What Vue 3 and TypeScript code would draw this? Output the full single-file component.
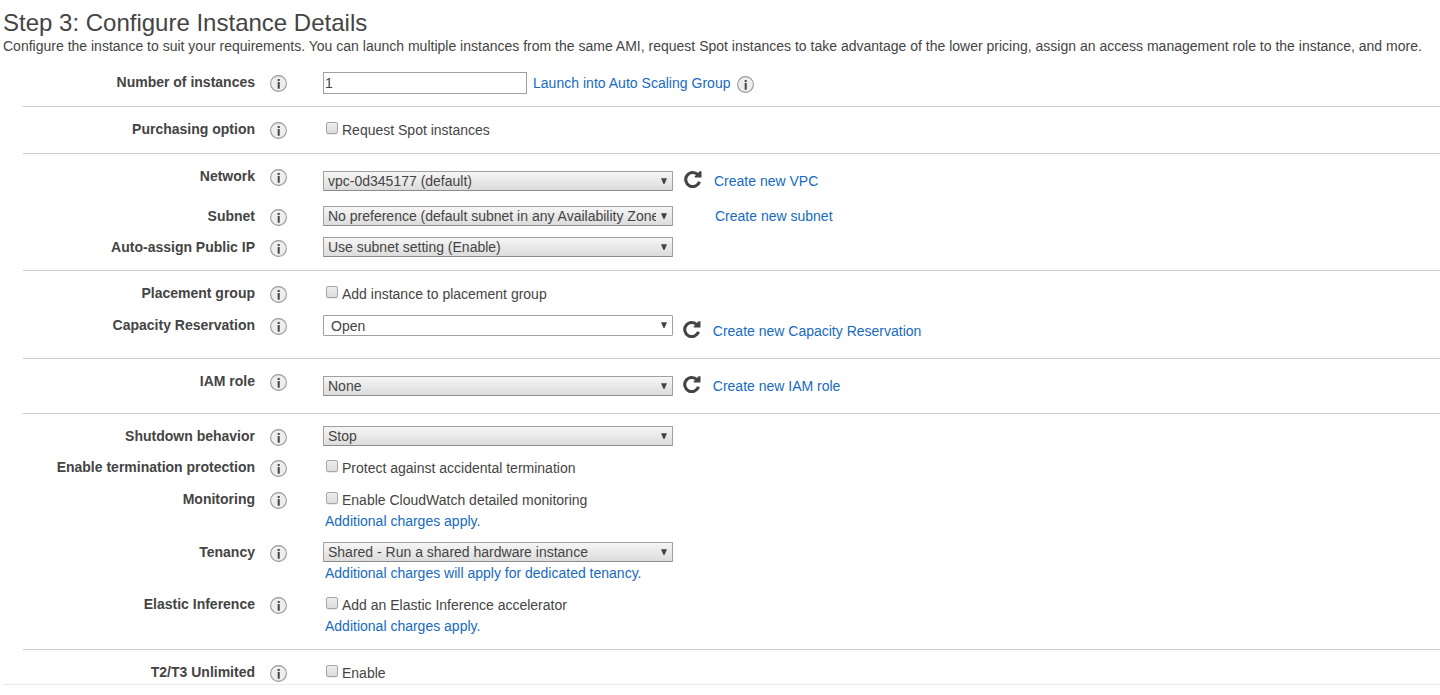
<script setup lang="ts">
import { reactive, defineComponent, h } from 'vue'

interface Row {
  id: string
  label: string
  kind: 'number' | 'check' | 'select'
  text: string
  refresh?: boolean
  link?: string
  note?: string
}

const sections: Row[][] = [
  [{ id: 'count', label: 'Number of instances', kind: 'number', text: '1', link: 'Launch into Auto Scaling Group' }],
  [{ id: 'purchase', label: 'Purchasing option', kind: 'check', text: 'Request Spot instances' }],
  [
    { id: 'network', label: 'Network', kind: 'select', text: 'vpc-0d345177 (default)', refresh: true, link: 'Create new VPC' },
    { id: 'subnet', label: 'Subnet', kind: 'select', text: 'No preference (default subnet in any Availability Zone)', link: 'Create new subnet' },
    { id: 'publicip', label: 'Auto-assign Public IP', kind: 'select', text: 'Use subnet setting (Enable)' },
  ],
  [
    { id: 'placement', label: 'Placement group', kind: 'check', text: 'Add instance to placement group' },
    { id: 'capacity', label: 'Capacity Reservation', kind: 'select', text: 'Open', refresh: true, link: 'Create new Capacity Reservation' },
  ],
  [{ id: 'iam', label: 'IAM role', kind: 'select', text: 'None', refresh: true, link: 'Create new IAM role' }],
  [
    { id: 'shutdown', label: 'Shutdown behavior', kind: 'select', text: 'Stop' },
    { id: 'termination', label: 'Enable termination protection', kind: 'check', text: 'Protect against accidental termination' },
    { id: 'monitoring', label: 'Monitoring', kind: 'check', text: 'Enable CloudWatch detailed monitoring', note: 'Additional charges apply.' },
    { id: 'tenancy', label: 'Tenancy', kind: 'select', text: 'Shared - Run a shared hardware instance', note: 'Additional charges will apply for dedicated tenancy.' },
    { id: 'elastic', label: 'Elastic Inference', kind: 'check', text: 'Add an Elastic Inference accelerator', note: 'Additional charges apply.' },
  ],
  [{ id: 'unlimited', label: 'T2/T3 Unlimited', kind: 'check', text: 'Enable' }],
]

const checked = reactive<Record<string, boolean>>({})

const InfoIcon = defineComponent({
  render: () =>
    h('svg', { width: 17, height: 17, viewBox: '0 0 17 17' }, [
      h('circle', { cx: 8.5, cy: 8.5, r: 7.9, fill: '#eeeeee', stroke: '#999999', 'stroke-width': 1.1 }),
      h('path', { d: 'M7.7 4h2v1.9h-2zM7.7 7h2v6.7h-2z', fill: '#444444' }),
    ]),
})
</script>

<template>
  <main class="page">
    <h1>Step 3: Configure Instance Details</h1>
    <p class="intro">Configure the instance to suit your requirements. You can launch multiple instances from the same AMI, request Spot instances to take advantage of the lower pricing, assign an access management role to the instance, and more.</p>
    <form class="form" @submit.prevent>
      <section v-for="(rows, i) in sections" :key="i">
        <div v-for="row in rows" :key="row.id" class="row" :class="row.id">
          <label class="label" :for="row.id">{{ row.label }}</label>
          <InfoIcon class="info" />
          <div class="field">
            <div class="control">
              <input v-if="row.kind === 'number'" :id="row.id" class="number" type="text" :value="row.text" />
              <label v-else-if="row.kind === 'check'" class="check">
                <input :id="row.id" v-model="checked[row.id]" type="checkbox" />
                <span>{{ row.text }}</span>
              </label>
              <div v-else class="select">
                <select :id="row.id"><option>{{ row.text }}</option></select>
                <svg class="arrow" width="6" height="6" viewBox="0 0 6 6"><path d="M0 0.2h6L3.5 5.9h-1z" fill="#444" /></svg>
              </div>
              <svg v-if="row.refresh" class="refresh" width="18" height="18" viewBox="0 0 18 18">
                <path d="M14 4.8A7.05 7.05 0 1 0 15.5 11.7" fill="none" stroke="#444" stroke-width="3.1" />
                <path d="M17.5 1.2v6.2h-6.6v-1.2l4.6-5z" fill="#444" />
              </svg>
              <a v-if="row.link" class="link">{{ row.link }}</a>
              <InfoIcon v-if="row.kind === 'number'" class="info-after" />
            </div>
            <a v-if="row.note" class="note">{{ row.note }}</a>
          </div>
        </div>
      </section>
    </form>
  </main>
</template>

<style>
body { margin: 0; background: #fff; }
</style>

<style scoped>
.page {
  height: 695px;
  overflow: hidden;
  box-sizing: border-box;
  padding: 9px 0 0 3px;
  color: #444;
  font: 14px/16px "Liberation Sans", Arial, sans-serif;
}
h1 { margin: 0; font-size: 24px; line-height: 28px; font-weight: 400; }
.intro { margin: 1px 0 0; white-space: nowrap; letter-spacing: .004px; }
.form { margin-top: 6px; border-bottom: 1px solid #e8e8e8; }
section { margin-left: 20px; padding-top: 12px; border-bottom: 1px solid #ccc; }
section:last-child { border-bottom: 0; }
.row { display: grid; grid-template-columns: 232px 17px 1fr; height: 32px; align-items: start; }
.label { padding-top: 2px; text-align: right; font-weight: 700; }
.info { display: block; margin: 3px 0 0 15px; }
.field { padding-left: 51px; }
.control { display: flex; align-items: flex-start; }
section > .row:last-child { height: 34px; }
.row.network { height: 40px; }
.row.subnet, .row.shutdown { height: 31px; }
section > .row.publicip { height: 33px; }
section > .row.capacity { height: 43px; }
section > .row.iam { height: 42px; }
.row.monitoring { height: 53px; }
.row.tenancy { height: 52px; }
section > .row.elastic { height: 55px; }
section > .row.unlimited { height: 22px; }
.network .field, .iam .field { padding-top: 5px; }

.number {
  width: 204px;
  height: 22px;
  box-sizing: border-box;
  margin: 0;
  padding: 0 1px;
  border: 1px solid #a0a0a0;
  border-radius: 0;
  font: inherit;
  color: #444;
}
.check { display: flex; padding: 3px 0 0 3px; white-space: nowrap; }
.check input {
  appearance: none;
  width: 12px;
  height: 12px;
  margin: 0 4px 0 0;
  border: 1px solid #a6a6a6;
  border-radius: 2px;
  background: linear-gradient(#ededed, #dcdcdc);
  box-shadow: 0 1px 0 rgba(0, 0, 0, .08);
}
.check input:checked { background: #777; }
.select { position: relative; width: 350px; height: 20px; }
select {
  appearance: none;
  display: block;
  width: 100%;
  height: 100%;
  box-sizing: border-box;
  margin: 0;
  padding: 0 16px 0 4px;
  border: 1px solid #a0a0a0;
  border-bottom-color: #8c8c8c;
  border-radius: 1px;
  background: linear-gradient(#f6f6f6, #dcdcdc);
  font: inherit;
  color: #444;
}
.arrow { position: absolute; right: 6px; top: 7px; }
.capacity .select { height: 21px; }
.capacity select { background: #fff; padding-left: 7px; border-color: #a0a0a0; }
.refresh { margin: -1px 0 0 11px; }
.capacity .refresh { margin: 5px 0 0 10px; }
.iam .refresh { margin-left: 10px; }
.link, .note { color: #166ac0; cursor: pointer; white-space: nowrap; }
.link { margin: 2px 0 0 12px; }
.count .link { margin: 3px 0 0 6px; letter-spacing: .02px; }
.subnet .link { margin-left: 42px; }
.capacity .link { margin: 8px 0 0 11.8px; }
.iam .link { margin-left: 11.8px; }
.info-after { margin: 4px 0 0 6.4px; }
.note { display: block; margin: 5px 0 0 2px; }
.tenancy .note { margin-top: 3px; }
</style>
